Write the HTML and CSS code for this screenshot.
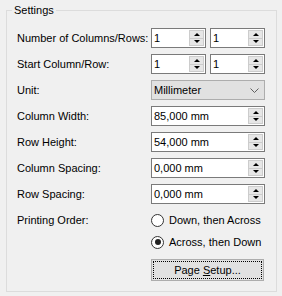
FILE: index.html
```html
<!DOCTYPE html>
<html lang="en">
<head>
    <meta charset="UTF-8">
    <title>Settings</title>
    <link rel="stylesheet" href="styles.css">
</head>
<body>

    <fieldset class="settings">
        <legend class="settings-title">Settings</legend>
        <div class="form">

            <span class="label">Number of Columns/Rows:</span>
            <div class="pair">
                <div class="spin">
                    <span class="value">1</span>
                    <span class="arrows"><span class="arrow up"></span><span class="arrow down"></span></span>
                </div>
                <div class="spin">
                    <span class="value">1</span>
                    <span class="arrows"><span class="arrow up"></span><span class="arrow down"></span></span>
                </div>
            </div>

            <span class="label">Start Column/Row:</span>
            <div class="pair">
                <div class="spin">
                    <span class="value">1</span>
                    <span class="arrows"><span class="arrow up"></span><span class="arrow down"></span></span>
                </div>
                <div class="spin">
                    <span class="value">1</span>
                    <span class="arrows"><span class="arrow up"></span><span class="arrow down"></span></span>
                </div>
            </div>

            <span class="label">Unit:</span>
            <div class="combo">
                <span class="value">Millimeter</span>
                <svg class="chevron" width="9" height="5" viewBox="0 0 9 5"><path d="M0.5 0.5 L4.5 4.5 L8.5 0.5" fill="none" stroke="#606060" stroke-width="1"/></svg>
            </div>

            <span class="label">Column Width:</span>
            <div class="spin">
                <span class="value">85,000 mm</span>
                <span class="arrows"><span class="arrow up"></span><span class="arrow down"></span></span>
            </div>

            <span class="label">Row Height:</span>
            <div class="spin">
                <span class="value">54,000 mm</span>
                <span class="arrows"><span class="arrow up"></span><span class="arrow down"></span></span>
            </div>

            <span class="label">Column Spacing:</span>
            <div class="spin">
                <span class="value">0,000 mm</span>
                <span class="arrows"><span class="arrow up"></span><span class="arrow down"></span></span>
            </div>

            <span class="label">Row Spacing:</span>
            <div class="spin">
                <span class="value">0,000 mm</span>
                <span class="arrows"><span class="arrow up"></span><span class="arrow down"></span></span>
            </div>

            <span class="label">Printing Order:</span>
            <div class="radio-group">
                <div class="radio"><span class="circle"></span>Down, then Across</div>
                <div class="radio"><span class="circle checked"></span>Across, then Down</div>
                <button class="page-setup"><span class="focus">Page <u>S</u>etup...</span></button>
            </div>

        </div>
    </fieldset>

</body>
</html>
```

FILE: styles.css
```css
body{
    margin: 0;
    background-color: #f0f0f0;
    font-family: "Liberation Sans", Arial, sans-serif;
    font-size: 11px;
    color: #000;
}

.settings{
    margin: 4px 0 0 6px;
    width: 271px;
    box-sizing: border-box;
    border: 1px solid #dcdcdc;
    padding: 0;
}
.settings-title{
    margin-left: 5px;
    padding: 0 2px;
    line-height: 13px;
}

.form{
    display: grid;
    grid-template-columns: 134px 114px;
    grid-auto-rows: 20px;
    row-gap: 6px;
    align-items: center;
    padding: 11px 0 9px 10px;
}
.label{
    line-height: 13px;
}

.pair{
    display: flex;
    gap: 4px;
    height: 20px;
}
.pair .spin{
    width: 55px;
}

.spin{
    height: 20px;
    box-sizing: border-box;
    border: 1px solid #7a7a7a;
    background-color: #fff;
    display: flex;
    align-items: center;
    justify-content: space-between;
    padding-left: 2px;
}
.arrows{
    display: flex;
    flex-direction: column;
    width: 15px;
    height: 16px;
    margin-right: 1px;
}
.arrow{
    flex: 1;
    box-sizing: border-box;
    border: 1px solid #cccccc;
    background-color: #e6e6e6;
    display: flex;
    align-items: center;
    justify-content: center;
}
.arrow.up{
    border-bottom: none;
}
.arrow::after{
    content: "";
    width: 0;
    height: 0;
    border-left: 3px solid transparent;
    border-right: 3px solid transparent;
}
.arrow.up::after{
    border-bottom: 3px solid #000;
}
.arrow.down::after{
    border-top: 3px solid #000;
}

.combo{
    height: 20px;
    box-sizing: border-box;
    border: 1px solid #adadad;
    background-color: #e1e1e1;
    display: flex;
    align-items: center;
    justify-content: space-between;
    padding: 0 5px 0 2px;
}

.radio-group{
    grid-row: span 3;
    align-self: start;
    display: flex;
    flex-direction: column;
    gap: 2px;
}
.radio{
    height: 20px;
    display: flex;
    align-items: center;
    gap: 5px;
}
.circle{
    width: 13px;
    height: 13px;
    box-sizing: border-box;
    border: 1px solid #333;
    border-radius: 50%;
    background-color: #fff;
    display: flex;
    align-items: center;
    justify-content: center;
}
.circle.checked::after{
    content: "";
    width: 6px;
    height: 6px;
    border-radius: 50%;
    background-color: #222;
}

.page-setup{
    margin-top: 5px;
    width: 113px;
    height: 22px;
    padding: 1px;
    border: 1px solid #adadad;
    background-color: #e1e1e1;
    font: inherit;
    color: #000;
}
.focus{
    display: block;
    height: 100%;
    box-sizing: border-box;
    border: 1px dotted #000;
    line-height: 16px;
    text-align: center;
}
```
